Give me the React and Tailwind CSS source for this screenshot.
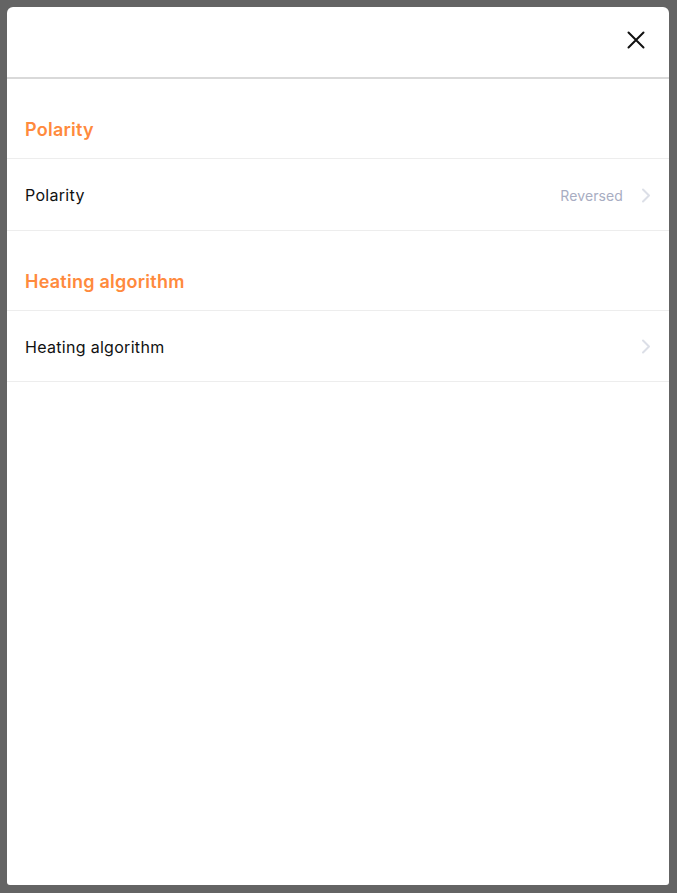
import React from "react";

function Chevron() {
  return (
    <svg width="10" height="15" viewBox="0 0 10 15" fill="none" className="shrink-0">
      <path d="M2 1.5L8 7.5L2 13.5" stroke="#dcdfe7" strokeWidth="2" strokeLinecap="round" strokeLinejoin="round" />
    </svg>
  );
}

function SectionHeader({ title }) {
  return (
    <div className="h-[80px] flex items-end px-[18px] pb-[16px] border-b border-[#ededed]">
      <span className="text-[18px] font-semibold text-[#ff8a3d] leading-[24px] tracking-[0.25px]">{title}</span>
    </div>
  );
}

function Row({ label, value, last }) {
  return (
    <div className={last ? "h-[71px] flex items-center justify-between px-[18px] pt-[1px] border-b border-[#ededed]" : "h-[72px] flex items-center justify-between px-[18px] pt-[1px] border-b border-[#ededed]"}>
      <span className="text-[16px] text-[#111111] tracking-[0.3px]">{label}</span>
      <div className="flex items-center gap-[18px]">
        {value && <span className="text-[14px] text-[#a8adc2] tracking-[0.1px]">{value}</span>}
        <Chevron />
      </div>
    </div>
  );
}

export default function App() {
  return (
    <div className="min-h-[893px] w-full bg-[#646464] p-[7px] pr-[8px] pb-[8px] flex" style={{ fontFamily: '"Inter", "Open Sans", sans-serif' }}>
      <div className="flex-1 bg-white rounded-t-[6px] rounded-b-[3px] flex flex-col overflow-hidden">
        <div className="h-[72px] shrink-0 flex items-center justify-end pr-[24px] pb-[4px] border-b-2 border-[#d9d9d9]">
          <svg width="18" height="18" viewBox="0 0 18 18" fill="none">
            <path d="M1.5 1.5L16.5 16.5M16.5 1.5L1.5 16.5" stroke="#111" strokeWidth="2" strokeLinecap="round" />
          </svg>
        </div>
        <SectionHeader title="Polarity" />
        <Row label="Polarity" value="Reversed" />
        <SectionHeader title="Heating algorithm" />
        <Row label="Heating algorithm" last />
      </div>
    </div>
  );
}
